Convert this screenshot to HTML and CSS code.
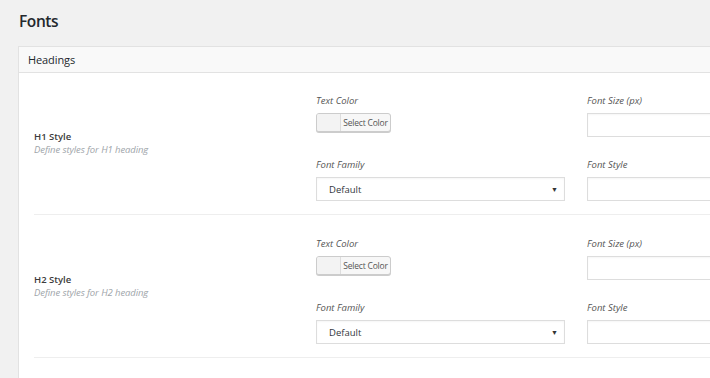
FILE: index.html
```html
<!DOCTYPE html>
<html lang="en">
<head>
  <meta charset="UTF-8" />
  <title>Fonts</title>
  <link rel="stylesheet" href="styles.css">
</head>
<body>
<h1 class="page-title">Fonts</h1>

<div class="panel">
  <div class="panel-head">Headings</div>
  <div class="panel-body">

    <div class="opt-row">
      <div class="opt-info">
        <div class="opt-name">H1 Style</div>
        <div class="opt-desc">Define styles for H1 heading</div>
      </div>
      <div class="opt-fields">
        <div class="field">
          <label>Text Color</label>
          <div class="color-btn"><span class="swatch"></span><span class="color-text">Select Color</span></div>
        </div>
        <div class="field">
          <label>Font Size (px)</label>
          <div class="text-input"></div>
        </div>
        <div class="field">
          <label>Font Family</label>
          <div class="select-box"><span>Default</span><span class="arrow">▼</span></div>
        </div>
        <div class="field">
          <label>Font Style</label>
          <div class="text-input"></div>
        </div>
      </div>
    </div>

    <div class="opt-row">
      <div class="opt-info">
        <div class="opt-name">H2 Style</div>
        <div class="opt-desc">Define styles for H2 heading</div>
      </div>
      <div class="opt-fields">
        <div class="field">
          <label>Text Color</label>
          <div class="color-btn"><span class="swatch"></span><span class="color-text">Select Color</span></div>
        </div>
        <div class="field">
          <label>Font Size (px)</label>
          <div class="text-input"></div>
        </div>
        <div class="field">
          <label>Font Family</label>
          <div class="select-box"><span>Default</span><span class="arrow">▼</span></div>
        </div>
        <div class="field">
          <label>Font Style</label>
          <div class="text-input"></div>
        </div>
      </div>
    </div>

  </div>
</div>
</body>
</html>
```

FILE: styles.css
```css
html, body {
  overflow: hidden;
}
body {
  margin: 0;
  padding: 0 0 0 18px;
  background: #f1f1f1;
  font-family: "Open Sans", "Noto Sans", sans-serif;
  color: #23282d;
}
.page-title {
  margin: 0;
  height: 46px;
  line-height: 42px;
  font-size: 15.5px;
  font-weight: 600;
  padding-left: 1px;
  letter-spacing: -0.4px;
}
.panel {
  background: #fff;
  border: 1px solid #e2e2e2;
  border-right: none;
  border-bottom: none;
  overflow: hidden;
  padding-bottom: 20px;
}
.panel-head {
  height: 25px;
  line-height: 25px;
  padding-left: 9px;
  background: #f9f9f9;
  border-bottom: 1px solid #e2e2e2;
  font-size: 11px;
  letter-spacing: -0.1px;
}
.panel-body {
  padding: 0 0 0 15px;
}
.opt-row {
  display: flex;
  align-items: center;
  width: 900px;
  padding: 21px 0 13px;
  border-bottom: 1px solid #eeeeee;
}
.opt-row:first-child {
  padding-top: 20px;
}
.opt-info {
  width: 282px;
  flex-shrink: 0;
  padding-bottom: 8px;
}
.opt-name {
  font-size: 9.5px;
  font-weight: 600;
  color: #3c3c3c;
  line-height: 13px;
}
.opt-desc {
  font-size: 9.5px;
  font-style: italic;
  color: #a0a5aa;
  line-height: 14px;
  letter-spacing: -0.1px;
}
.opt-fields {
  display: grid;
  grid-template-columns: 249px 249px;
  column-gap: 22px;
  row-gap: 20px;
}
.field label {
  display: block;
  height: 18px;
  line-height: 15px;
  margin-bottom: 2px;
  font-size: 9.5px;
  font-style: italic;
  color: #555;
}
.color-btn {
  display: flex;
  width: 75px;
  height: 19px;
  box-sizing: border-box;
  border: 1px solid #cccccc;
  border-radius: 3px;
  background: #f7f7f7;
  box-shadow: 0 1px 0 #cccccc;
  overflow: hidden;
}
.swatch {
  width: 23px;
  border-right: 1px solid #dddddd;
  background: #f3f3f3;
}
.color-text {
  flex: 1;
  text-align: center;
  font-size: 8.5px;
  line-height: 17px;
  color: #555;
  letter-spacing: -0.2px;
}
.text-input,
.select-box {
  height: 24px;
  box-sizing: border-box;
  border: 1px solid #dddddd;
  background: #fff;
  box-shadow: inset 0 1px 2px rgba(0, 0, 0, 0.04);
}
.select-box {
  display: flex;
  justify-content: space-between;
  align-items: center;
  padding: 0 6px 0 12px;
  font-size: 9.5px;
  color: #32373c;
}
.arrow {
  font-size: 7px;
  color: #333;
}
```
